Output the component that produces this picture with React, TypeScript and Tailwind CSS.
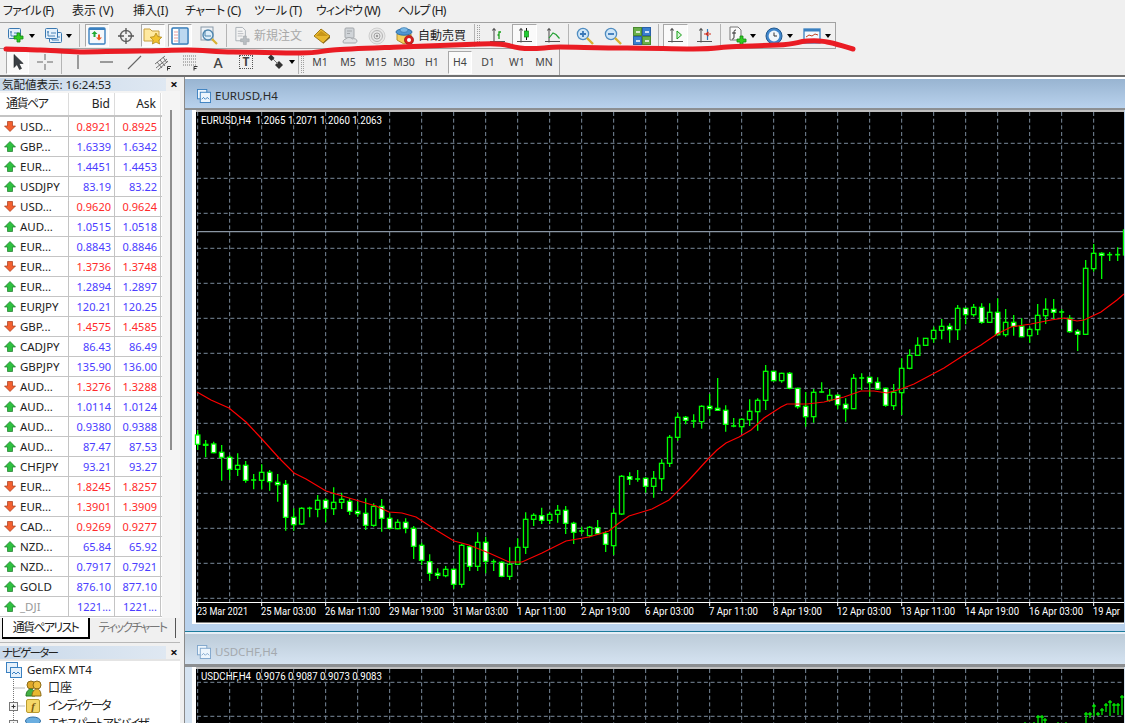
import type { ReactNode } from "react";

const FONT = "font-['Noto_Sans','Noto_Sans_CJK_JP',sans-serif] [font-feature-settings:'palt']";

// wick top, body top, body bottom, wick bottom, filled
type Candle = [number, number, number, number, number];

// read off the chart at 3x: first set y = 400 + v/3, second set y = 220 + v/3
const candlesA: Candle[] = [
  [90, 105, 133, 150, 1], [120, 133, 136, 172, 0], [125, 132, 158, 160, 1], [135, 157, 172, 242, 1],
  [165, 172, 208, 240, 1], [160, 196, 208, 228, 0], [183, 196, 241, 248, 1], [222, 240, 240, 268, 0],
  [193, 217, 241, 268, 0], [210, 217, 245, 272, 1], [222, 247, 254, 305, 1], [240, 253, 352, 392, 1],
  [325, 352, 374, 392, 1], [322, 325, 372, 375, 0], [320, 325, 325, 352, 0], [285, 301, 328, 352, 0],
  [295, 301, 325, 367, 1], [262, 307, 326, 345, 0], [278, 298, 307, 327, 0], [295, 304, 334, 345, 1],
  [305, 334, 341, 350, 1], [295, 340, 376, 390, 1], [310, 319, 376, 380, 0], [297, 319, 355, 395, 1],
  [340, 355, 385, 388, 1], [358, 367, 386, 388, 0], [355, 367, 385, 400, 1], [378, 385, 439, 477, 1],
  [428, 436, 481, 495, 1], [463, 485, 520, 543, 1], [505, 520, 526, 537, 1], [498, 508, 527, 532, 0],
  [505, 508, 553, 566, 1], [432, 436, 553, 563, 0], [436, 440, 499, 513, 1], [397, 427, 499, 513, 0],
  [410, 427, 484, 520, 1], [478, 485, 485, 513, 0], [484, 487, 529, 532, 1], [442, 493, 529, 540, 0],
  [415, 442, 493, 495, 0], [337, 358, 442, 462, 0], [340, 346, 358, 378, 0], [323, 347, 361, 372, 1],
  [335, 343, 361, 372, 0], [315, 331, 343, 368, 0], [318, 331, 370, 402, 1], [365, 370, 397, 432, 1],
  [380, 393, 393, 402, 0], [378, 382, 407, 412, 0], [360, 383, 401, 405, 1], [393, 401, 433, 456, 1],
  [325, 340, 437, 465, 0], [225, 229, 342, 345, 0], [217, 230, 238, 255, 1], [210, 237, 237, 245, 0],
  [232, 235, 259, 278, 1], [213, 235, 259, 293, 0], [178, 190, 236, 273, 0],
];

const candlesB: Candle[] = [
  [645, 652, 730, 741, 0], [578, 592, 652, 662, 0], [588, 592, 601, 613, 1], [583, 603, 603, 623, 0],
  [556, 559, 605, 626, 0], [522, 559, 566, 587, 1], [474, 565, 571, 572, 1], [556, 571, 613, 635, 1],
  [594, 618, 618, 622, 0], [595, 598, 620, 638, 0], [538, 574, 599, 618, 0], [535, 541, 575, 632, 0],
  [435, 454, 541, 570, 0], [452, 454, 482, 484, 1], [458, 460, 482, 488, 0], [456, 460, 505, 508, 1],
  [503, 505, 560, 566, 1], [516, 559, 590, 620, 1], [507, 517, 590, 608, 0], [487, 516, 516, 518, 0],
  [507, 526, 541, 545, 0], [522, 526, 554, 568, 1], [535, 553, 566, 605, 1], [462, 475, 566, 566, 0],
  [460, 474, 474, 510, 0], [470, 472, 488, 530, 1], [472, 487, 507, 510, 1], [503, 505, 556, 560, 1],
  [492, 517, 557, 570, 0], [415, 445, 518, 585, 0], [388, 406, 445, 448, 0], [352, 376, 406, 406, 0],
  [355, 355, 376, 378, 0], [320, 331, 356, 368, 0], [297, 319, 331, 358, 0], [310, 319, 329, 368, 1],
  [255, 265, 329, 360, 0], [265, 265, 284, 313, 1], [252, 262, 284, 290, 0], [250, 262, 307, 311, 1],
  [250, 277, 307, 308, 0], [235, 277, 344, 346, 1], [267, 307, 344, 350, 0], [285, 307, 319, 347, 1],
  [295, 319, 350, 352, 1], [320, 328, 347, 368, 0], [252, 286, 329, 345, 0], [235, 268, 287, 312, 0],
  [237, 268, 277, 298, 1], [268, 276, 276, 300, 0], [285, 295, 335, 338, 1], [328, 334, 343, 393, 1],
  [120, 145, 343, 343, 0], [72, 100, 146, 155, 0], [97, 100, 106, 177, 1], [96, 104, 104, 123, 0],
  [82, 104, 104, 123, 0], [25, 30, 105, 110, 0],
];

const ma: [number, number][] = [
  [198, 392], [205, 396], [212, 400], [230, 408], [247, 422], [262, 438], [280, 458], [295, 473], [307, 479],
  [327, 491], [350, 498], [377, 506], [390, 512], [403, 513], [417, 517], [437, 530], [455, 541], [470, 545],
  [490, 553], [510, 562], [523, 562], [543, 553], [567, 541], [590, 537], [610, 531], [620, 523], [630, 516],
  [653, 509], [670, 500], [690, 480], [710, 458], [718, 450], [727, 443], [740, 437], [752, 430], [765, 418],
  [782, 407], [788, 404], [808, 404], [825, 402], [845, 397], [862, 391], [875, 391], [888, 393], [902, 389],
  [915, 384], [945, 368], [962, 357], [982, 345], [998, 334], [1012, 327], [1032, 324], [1052, 320], [1065, 318],
  [1078, 321], [1085, 320], [1102, 312], [1118, 300], [1125, 294],
];

// label, drawn width
const labels: [string, number][] = [
  ["23 Mar 2021", 51], ["25 Mar 03:00", 55], ["26 Mar 11:00", 55], ["29 Mar 19:00", 55], ["31 Mar 03:00", 55],
  ["1 Apr 11:00", 49], ["2 Apr 19:00", 49], ["6 Apr 03:00", 49], ["7 Apr 11:00", 49], ["8 Apr 19:00", 49],
  ["12 Apr 03:00", 54], ["13 Apr 11:00", 54], ["14 Apr 19:00", 54], ["16 Apr 03:00", 54], ["19 Apr", 27],
];

const quotes: [string, string, string, number][] = [
  ["USD...", "0.8921", "0.8925", 0], ["GBP...", "1.6339", "1.6342", 1], ["EUR...", "1.4451", "1.4453", 1],
  ["USDJPY", "83.19", "83.22", 1], ["USD...", "0.9620", "0.9624", 0], ["AUD...", "1.0515", "1.0518", 1],
  ["EUR...", "0.8843", "0.8846", 1], ["EUR...", "1.3736", "1.3748", 0], ["EUR...", "1.2894", "1.2897", 1],
  ["EURJPY", "120.21", "120.25", 1], ["GBP...", "1.4575", "1.4585", 0], ["CADJPY", "86.43", "86.49", 1],
  ["GBPJPY", "135.90", "136.00", 1], ["AUD...", "1.3276", "1.3288", 0], ["AUD...", "1.0114", "1.0124", 1],
  ["AUD...", "0.9380", "0.9388", 1], ["AUD...", "87.47", "87.53", 1], ["CHFJPY", "93.21", "93.27", 1],
  ["EUR...", "1.8245", "1.8257", 0], ["EUR...", "1.3901", "1.3909", 0], ["CAD...", "0.9269", "0.9277", 0],
  ["NZD...", "65.84", "65.92", 1], ["NZD...", "0.7917", "0.7921", 1], ["GOLD", "876.10", "877.10", 1],
  ["_DJI", "1221...", "1221...", 1],
];

function CandleMark({ x, c, y0 }: { x: number; c: Candle; y0: number }) {
  const [wt, bt, bb, wb, filled] = c;
  const y = (v: number) => y0 + v / 3;
  if (bt === bb) {
    return (
      <g stroke="#00ff00" strokeWidth="1.3">
        <line x1={x} x2={x} y1={y(wt)} y2={y(wb)} />
        <line x1={x - 2.5} x2={x + 2.5} y1={y(bt)} y2={y(bt)} strokeWidth="1.6" />
      </g>
    );
  }
  return (
    <g stroke="#00ff00" strokeWidth="1.3">
      <line x1={x} x2={x} y1={y(wt)} y2={y(wb)} />
      <rect x={x - 2.2} width="4.4" y={y(bt)} height={y(bb) - y(bt)} fill={filled ? "#ffffff" : "#000000"} />
    </g>
  );
}

function Grid({ top, bottom, rows }: { top: number; bottom: number; rows: number[] }) {
  const cols = Array.from({ length: 29 }, (_, i) => 198.67 + 32 * i);
  return (
    <g stroke="#7a8a9c" strokeWidth="1" strokeDasharray="4 2.67">
      {cols.map((x) => (
        <line key={x} x1={x} x2={x} y1={top} y2={bottom} />
      ))}
      {rows.map((y) => (
        <line key={y} x1="198" x2="1125" y1={y} y2={y} />
      ))}
    </g>
  );
}

function MainChart() {
  const rows = Array.from({ length: 14 }, (_, i) => 143.3 + 35 * i);
  return (
    <svg className="block shrink-0" width="932" height="514" viewBox="193 110 932 514">
      <rect x="193" y="110" width="932" height="514" fill="#000" />
      <rect x="193" y="110" width="4" height="514" fill="#fff" />
      <line x1="193" x2="1125" y1="111" y2="111" stroke="#fff" strokeWidth="1.4" />
      <Grid top={112} bottom={602} rows={rows} />
      <line x1="198" x2="1125" y1="231.7" y2="231.7" stroke="#8a96a4" strokeWidth="1.2" />
      <line x1="197" x2="1125" y1="602.500" y2="602.500" stroke="#fff" />
      {labels.map(([l, len], i) => (
        <g key={l}>
          <line x1={198.67 + 64 * i} x2={198.67 + 64 * i} y1="602" y2="606" stroke="#fff" />
          <text
            x={198 + 64 * i}
            y="615"
            fill="#fff"
            fontSize="11"
            fontFamily="Roboto, sans-serif"
            textLength={len}
            lengthAdjust="spacingAndGlyphs"
          >
            {l}
          </text>
        </g>
      ))}
      {candlesA.map((c, i) => (
        <CandleMark key={i} x={198.67 + 8 * i} c={c} y0={400} />
      ))}
      {candlesB.map((c, i) => (
        <CandleMark key={i} x={670.67 + 8 * i} c={c} y0={220} />
      ))}
      <polyline points={ma.map((p) => p.join(",")).join(" ")} fill="none" stroke="#ff0000" strokeWidth="1.2" />
      <text
        x="202"
        y="124"
        fill="#fff"
        fontSize="10.5"
        fontFamily="Roboto, sans-serif"
        xmlSpace="preserve"
        textLength="181"
        lengthAdjust="spacingAndGlyphs"
      >
        EURUSD,H4  1.2065 1.2071 1.2060 1.2063
      </text>
      <line x1="193" x2="1125" y1="623.300" y2="623.300" stroke="#fff" strokeWidth="1.4" />
    </svg>
  );
}

function SecondChart() {
  const bars: [number, number, number][] = [
    [1026, 722, 723], [1035, 722, 723], [1039, 715, 723], [1043, 715, 723], [1046, 718, 723], [1059, 722, 723],
    [1067, 722, 723], [1087, 712, 723], [1091, 712, 718], [1095, 704, 716], [1099, 712, 716], [1103, 708, 715],
    [1107, 703, 712], [1111, 700, 716], [1115, 703, 713], [1119, 703, 715], [1123, 695, 715],
  ];
  return (
    <svg className="block shrink-0" width="932" height="56" viewBox="193 667 932 56">
      <rect x="193" y="667" width="932" height="56" fill="#000" />
      <rect x="193" y="667" width="4" height="56" fill="#fff" />
      <line x1="193" x2="1125" y1="668" y2="668" stroke="#fff" strokeWidth="1.4" />
      <Grid top={669} bottom={723} rows={[682.3, 716.3]} />
      {bars.map(([x, t, b]) => (
        <g key={x} stroke="#00ff00" strokeWidth="1.2">
          <line x1={x} x2={x} y1={t} y2={b} />
          <line x1={x - 2} x2={x + 2} y1={t + 2} y2={t + 2} />
        </g>
      ))}
      <text
        x="202"
        y="680"
        fill="#fff"
        fontSize="10.5"
        fontFamily="Roboto, sans-serif"
        xmlSpace="preserve"
        textLength="181"
        lengthAdjust="spacingAndGlyphs"
      >
        USDCHF,H4  0.9076 0.9087 0.9073 0.9083
      </text>
    </svg>
  );
}

function Icon({ children, w = 18, h = 18 }: { children: ReactNode; w?: number; h?: number }) {
  return (
    <svg width={w} height={h} viewBox={`0 0 ${w} ${h}`} className="block">
      {children}
    </svg>
  );
}

function Plus({ x, y }: { x: number; y: number }) {
  return (
    <path
      d={`M${x + 3} ${y}h3v3h3v3h-3v3h-3v-3h-3v-3h3z`}
      fill="#33cc22"
      stroke="#118811"
      strokeWidth=".8"
    />
  );
}

function ChartWin({ x, y, fill = "#e4f0fb" }: { x: number; y: number; fill?: string }) {
  return (
    <g>
      <rect x={x + 0.5} y={y + 0.5} width="12" height="10" rx="1" fill={fill} stroke="#3a78b0" />
      <path d={`M${x + 3} ${y + 3}v5h7M${x + 2} ${y + 4}h2M${x + 6} ${y + 5}h5`} stroke="#3a78b0" strokeWidth=".9" fill="none" />
    </g>
  );
}

const NewChartIcon = () => (
  <Icon>
    <ChartWin x={1} y={1} />
    <Plus x={7} y={6} />
  </Icon>
);
const ProfileIcon = () => (
  <Icon>
    <ChartWin x={5} y={5} />
    <ChartWin x={1} y={1} />
  </Icon>
);
const WatchIcon = () => (
  <Icon>
    <rect x="1" y="1" width="16" height="16" rx="1" fill="#f4f8fc" stroke="#3a80c0" strokeWidth="1.4" />
    <rect x="1" y="1" width="16" height="2" fill="#3a80c0" />
    <path d="M6.5 4l3 3h-2v3h-2v-3h-2z" fill="#22aa33" />
    <path d="M11 13.5l-3-3h2v-3h2v3h2z" fill="#ee5522" />
  </Icon>
);
const CrossCircleIcon = () => (
  <Icon>
    <circle cx="9" cy="9" r="5.5" fill="none" stroke="#666" strokeWidth="1.4" />
    <path d="M9 1v6M9 11v6M1 9h6M11 9h6" stroke="#555" strokeWidth="1.3" />
  </Icon>
);
const FolderStarIcon = () => (
  <Icon w={20} h={20}>
    <path d="M1 3h6l2 2h7v10H1z" fill="#ffe9a0" stroke="#c8a040" />
    <path d="M13 7l1.800 3.600 4 .6-2.900 2.800.7 4-3.600-1.900-3.600 1.900.7-4-2.900-2.800 4-.6z" fill="#f2c230" stroke="#a88010" strokeWidth=".7" />
  </Icon>
);
const NavIcon = () => (
  <Icon>
    <rect x="1" y="1" width="16" height="16" rx="1" fill="#fff" stroke="#2f78b8" strokeWidth="1.5" />
    <rect x="8" y="2" width="8" height="14" fill="#bcd8f0" />
    <path d="M8 2v14" stroke="#2f78b8" />
    <path d="M3.5 5h3M3.5 8h3M3.5 11h3M3.5 14h3" stroke="#d04040" strokeWidth="1.2" strokeDasharray="1 1" />
  </Icon>
);
const TesterIcon = () => (
  <Icon w={20} h={20}>
    <rect x="2" y="1" width="12" height="13" fill="#eef2f6" stroke="#8a9aa8" />
    <circle cx="9" cy="9" r="5" fill="#d8ecfa" fillOpacity=".8" stroke="#4f86ad" strokeWidth="1.4" />
    <path d="M6 4v6h6" stroke="#4f86ad" fill="none" />
    <path d="M13 13l5 5" stroke="#d8b030" strokeWidth="2.2" />
  </Icon>
);
const NewOrderIcon = () => (
  <Icon w={20} h={20}>
    <path d="M3 1h7l3 3v11H3z" fill="#f4f4f4" stroke="#aab0b6" />
    <path d="M5 5h5M5 7.500h6M5 10h5" stroke="#b8bcc0" />
    <path d="M11 10h3v3h3v3h-3v3h-3v-3H8v-3h3z" fill="#b9bec2" stroke="#a0a4a8" strokeWidth=".6" />
  </Icon>
);
const RibbonIcon = () => (
  <Icon>
    <path d="M1 9l7-7 9 7-7 7z" fill="#e8b830" stroke="#a07a18" />
    <path d="M3 9l5-5 7 5" fill="#c89618" />
    <path d="M10 16l7-7v2l-7 6z" fill="#8a6a18" />
  </Icon>
);
const PersonIcon = () => (
  <Icon>
    <rect x="4" y="1" width="9" height="10" rx="1" fill="#d0d4d8" stroke="#a4a8ac" />
    <path d="M6 4h5M6 6.500h3" stroke="#a4a8ac" />
    <path d="M2 15c0-2 2-3 3-3 1-2 5-2 6 0 2-1 5 0 5 2 0 1-1 2-2 2H4c-1 0-2 0-2-1z" fill="#e0e2e4" stroke="#a4a8ac" />
  </Icon>
);
const SignalIcon = () => (
  <Icon>
    <circle cx="9" cy="9" r="8" fill="#e8e8e8" stroke="#cfcfcf" />
    <circle cx="9" cy="9" r="5.500" fill="none" stroke="#b4b4b4" />
    <circle cx="9" cy="9" r="3" fill="none" stroke="#a4a4a4" />
    <circle cx="9" cy="9" r="1.200" fill="#999" />
  </Icon>
);
const AutoIcon = () => (
  <Icon w={20} h={20}>
    <path d="M2 8l7-3 7 3v6l-7 4-7-4z" fill="#f3cf5c" stroke="#b09030" />
    <ellipse cx="9" cy="6" rx="8" ry="3.200" fill="#4f96d2" stroke="#2f6ea4" />
    <ellipse cx="9" cy="4" rx="4" ry="2.400" fill="#7ab8e6" stroke="#2f6ea4" strokeWidth=".6" />
    <circle cx="14" cy="14" r="4.600" fill="#d42020" stroke="#8a1010" strokeWidth=".6" />
    <circle cx="14" cy="14" r="2" fill="#fff" />
  </Icon>
);
const Axes = () => <path d="M5 1.500v14M1 14.500h15M3.300 3.500L5 1.500l1.700 2" stroke="#555" strokeWidth="1.1" fill="none" />;
const BarsIcon = () => (
  <Icon>
    <Axes />
    <path d="M10 12V5h2M8.500 8H10" stroke="#17a017" strokeWidth="1.3" fill="none" />
  </Icon>
);
const CandleIcon = () => (
  <Icon>
    <Axes />
    <path d="M10.500 1v12" stroke="#111" />
    <rect x="8.500" y="4" width="4" height="6" fill="#22cc33" stroke="#118811" strokeWidth=".7" />
  </Icon>
);
const LineIcon = () => (
  <Icon>
    <Axes />
    <path d="M5 11l4-5 3 1.500 3.500 4" stroke="#22a033" strokeWidth="1.2" fill="none" />
  </Icon>
);
const ZoomIcon = ({ plus }: { plus?: boolean }) => (
  <Icon>
    <circle cx="7" cy="7" r="5.600" fill="#cfe6f8" stroke="#4f8cc0" strokeWidth="1.3" />
    <path d={plus ? "M4 7h6M7 4v6" : "M4 7h6"} stroke="#3a78b8" strokeWidth="1.8" />
    <path d="M11 11l6 6" stroke="#d8b030" strokeWidth="2.4" />
  </Icon>
);
const TileIcon = () => (
  <Icon>
    <rect x="0.5" y="0.5" width="8" height="8" fill="#6ab04a" stroke="#4a8a30" />
    <rect x="9.5" y="0.5" width="8" height="8" fill="#3a80d0" stroke="#2a60a8" />
    <rect x="0.5" y="9.5" width="8" height="8" fill="#3a80d0" stroke="#2a60a8" />
    <rect x="9.5" y="9.5" width="8" height="8" fill="#6ab04a" stroke="#4a8a30" />
    <path d="M3 5h4M12 5h4M3 14h4M12 14h4" stroke="#fff" strokeWidth="1.4" />
  </Icon>
);
const ScrollIcon = () => (
  <Icon>
    <Axes />
    <path d="M10 4l4.500 4-4.500 4z" fill="#d8f5d8" stroke="#18a018" />
  </Icon>
);
const ShiftIcon = () => (
  <Icon>
    <Axes />
    <path d="M11.500 2v11" stroke="#2f78b8" strokeWidth="1.2" />
    <path d="M8 7h7M12.500 5l-2.500 2 2.500 2" stroke="#d03020" strokeWidth="1.1" fill="none" />
  </Icon>
);
const IndicatorIcon = () => (
  <Icon w={20} h={20}>
    <path d="M2 1h8l3 3v10H2z" fill="#fafafa" stroke="#777" />
    <path d="M8 4c-2 0-2 1-2 3v4c0 2-1 2-2 2M4 7h4" stroke="#333" fill="none" />
    <Plus x={9} y={10} />
  </Icon>
);
const ClockIcon = () => (
  <Icon>
    <circle cx="9" cy="9" r="8" fill="#3f86cc" stroke="#22598f" />
    <circle cx="9" cy="9" r="5.400" fill="#f0f6fb" />
    <path d="M9 5.500V9h3" stroke="#333" fill="none" />
  </Icon>
);
const TemplateIcon = () => (
  <Icon>
    <rect x="1" y="2" width="16" height="14" fill="#f4f8fc" stroke="#3a80c0" strokeWidth="1.3" />
    <rect x="1" y="2" width="16" height="2.500" fill="#3a80c0" />
    <path d="M3 10l3-2 3 1 3-2 3 1" stroke="#c04020" fill="none" />
    <path d="M3 14h12" stroke="#70a050" />
  </Icon>
);
const ArrowIcon = () => (
  <Icon>
    <path d="M5 1.500v13l3-3 2.500 5 2-1-2.500-5h4.200z" fill="#3a3f44" stroke="#1e2124" strokeWidth=".6" />
  </Icon>
);
const ThinCrossIcon = () => (
  <Icon>
    <path d="M9 1v6M9 11v6M1 9h6M11 9h6" stroke="#666" />
  </Icon>
);
const VLineIcon = () => (
  <Icon>
    <path d="M9 2v14" stroke="#555" strokeWidth="1.1" />
  </Icon>
);
const HLineIcon = () => (
  <Icon>
    <path d="M2 9h13" stroke="#555" strokeWidth="1.1" />
  </Icon>
);
const TrendIcon = () => (
  <Icon>
    <path d="M2 16L15 3" stroke="#666" strokeWidth="1.1" />
  </Icon>
);
const ChannelIcon = () => (
  <Icon>
    <path d="M1 11l10-8M2 15l11-9M4 17l10-9M3 9l5 6M6 7l5 6M9 4l4 6" stroke="#666" strokeWidth=".9" />
    <path d="M13.500 17.500v-4h3.500M13.500 15.500h2.500" stroke="#333" fill="none" />
  </Icon>
);
const FiboIcon = () => (
  <Icon>
    <path d="M1 3h13M1 6h13M1 9h13M1 12h13" stroke="#777" strokeDasharray="1 1" />
    <path d="M12 17.500v-4h3.500M12 15.500h2.500" stroke="#333" fill="none" />
  </Icon>
);
const ShapesIcon = () => (
  <Icon>
    <path d="M4 1.500l3.500 3.500-3 3-3.500-3.500z" fill="#333" />
    <path d="M12 8l4 4-4 4-4-4z" fill="#333" />
    <path d="M6 6l5 5" stroke="#777" />
  </Icon>
);

function Caret({ className }: { className: string }) {
  return (
    <div className={`flex w-[7px] shrink-0 items-center justify-center ${className}`}>
      <div className="h-0 w-0 border-x-[3.5px] border-t-[4px] border-x-transparent border-t-black" />
    </div>
  );
}

function Btn({ className, pressed, children }: { className: string; pressed?: boolean; children?: ReactNode }) {
  const look = pressed
    ? "border border-t-[#a8a8a8] border-l-[#a8a8a8] border-r-white border-b-white bg-[#fafafa]"
    : "";
  return (
    <div className={`flex h-[23px] shrink-0 items-center justify-center ${look} ${className}`}>{children}</div>
  );
}

function Sep({ className }: { className: string }) {
  return <div className={`h-[23px] w-px shrink-0 bg-[#b4b4b4] ${className}`} />;
}

function Grip({ className }: { className: string }) {
  return (
    <div className={`h-[21px] w-[3px] shrink-0 border-x border-dotted border-x-[#a0a0a0] ${className}`} />
  );
}

function TopToolbar() {
  return (
    <div className="flex h-[27px] w-[836px] shrink-0 items-center border-y border-r border-[#a2a2a2]">
      <Btn className="ml-[5px] w-[22px]"><NewChartIcon /></Btn>
      <Caret className="ml-[1px]" />
      <Btn className="ml-[7px] w-[22px]"><ProfileIcon /></Btn>
      <Caret className="ml-[1px]" />
      <Sep className="ml-[7px]" />
      <Btn pressed className="ml-[5px] w-[24px]"><WatchIcon /></Btn>
      <Btn className="ml-[5px] w-[24px]"><CrossCircleIcon /></Btn>
      <Btn pressed className="ml-[3px] w-[24px]"><FolderStarIcon /></Btn>
      <Btn pressed className="ml-[3px] w-[24px]"><NavIcon /></Btn>
      <Btn className="ml-[5px] w-[24px]"><TesterIcon /></Btn>
      <Sep className="ml-[5px]" />
      <Btn className="ml-[6px] w-[19px]"><NewOrderIcon /></Btn>
      <div className="ml-[2px] w-[48px] shrink-0 whitespace-nowrap text-[12px] text-[#a9a9a9] [font-feature-settings:normal]">新規注文</div>
      <Btn className="ml-[8px] w-[23px]"><RibbonIcon /></Btn>
      <Btn className="ml-[6px] w-[22px]"><PersonIcon /></Btn>
      <Btn className="ml-[5px] w-[22px]"><SignalIcon /></Btn>
      <Btn className="ml-[6px] w-[22px]"><AutoIcon /></Btn>
      <div className="ml-[2px] w-[48px] shrink-0 whitespace-nowrap text-[12px] text-[#222] [font-feature-settings:normal]">自動売買</div>
      <Sep className="ml-[8px]" />
      <Grip className="ml-[2px]" />
      <Btn className="ml-[6px] w-[24px]"><BarsIcon /></Btn>
      <Btn pressed className="ml-[2px] w-[25px]"><CandleIcon /></Btn>
      <Btn className="ml-[4px] w-[24px]"><LineIcon /></Btn>
      <Sep className="ml-[3px]" />
      <Btn className="ml-[4px] w-[24px]"><ZoomIcon plus /></Btn>
      <Btn className="ml-[4px] w-[24px]"><ZoomIcon /></Btn>
      <Btn className="ml-[5px] w-[24px]"><TileIcon /></Btn>
      <Sep className="ml-[4px]" />
      <Btn pressed className="ml-[4px] w-[25px]"><ScrollIcon /></Btn>
      <Btn className="ml-[4px] w-[25px]"><ShiftIcon /></Btn>
      <Sep className="ml-[3px]" />
      <Btn className="ml-[7px] w-[20px]"><IndicatorIcon /></Btn>
      <Caret className="ml-[1px]" />
      <Btn className="ml-[8px] w-[20px]"><ClockIcon /></Btn>
      <Caret className="ml-[2px]" />
      <Btn className="ml-[9px] w-[20px]"><TemplateIcon /></Btn>
      <Caret className="ml-[2px]" />
    </div>
  );
}

function TfBtn({ label, className, pressed }: { label: string; className: string; pressed?: boolean }) {
  return (
    <Btn pressed={pressed} className={`w-[24px] pt-[2px] text-[10.5px] text-[#444] ${className}`}>
      {label}
    </Btn>
  );
}

function SecondToolbar() {
  return (
    <div className="flex h-[26px] w-[560px] shrink-0 items-center border-r border-[#a2a2a2]">
      <Btn pressed className="ml-[6px] w-[23px]"><ArrowIcon /></Btn>
      <Btn className="ml-[4px] w-[24px]"><ThinCrossIcon /></Btn>
      <Sep className="ml-[4px]" />
      <Btn className="ml-[4px] w-[24px]"><VLineIcon /></Btn>
      <Btn className="ml-[5px] w-[24px]"><HLineIcon /></Btn>
      <Btn className="ml-[4px] w-[24px]"><TrendIcon /></Btn>
      <Btn className="ml-[4px] w-[24px]"><ChannelIcon /></Btn>
      <Btn className="ml-[4px] w-[24px]"><FiboIcon /></Btn>
      <Btn className="ml-[3px] w-[24px] text-[14px] font-medium text-[#444]">A</Btn>
      <Btn className="ml-[4px] w-[24px]">
        <div className="flex h-[14px] w-[14px] items-center justify-center border border-dotted border-[#555] text-[12px] font-bold leading-none text-[#444]">T</div>
      </Btn>
      <Btn className="ml-[7px] w-[22px]"><ShapesIcon /></Btn>
      <Caret className="ml-[1px]" />
      <Sep className="ml-[3px]" />
      <Grip className="ml-[2px]" />
      <TfBtn label="M1" className="ml-[4px]" />
      <TfBtn label="M5" className="ml-[4px]" />
      <TfBtn label="M15" className="ml-[4px]" />
      <TfBtn label="M30" className="ml-[4px]" />
      <TfBtn label="H1" className="ml-[4px]" />
      <TfBtn label="H4" className="ml-[4px]" pressed />
      <TfBtn label="D1" className="ml-[4px]" />
      <TfBtn label="W1" className="ml-[5px]" />
      <TfBtn label="MN" className="ml-[3px]" />
    </div>
  );
}

function PanelHeader({ title, className = "" }: { title: string; className?: string }) {
  return (
    <div className="flex h-[13px] shrink-0 items-center">
      <div className={`flex h-full w-[166px] items-center whitespace-nowrap bg-gradient-to-r from-[#c9d9ea] to-[#dfe8f2] pl-[2px] text-[11.5px] text-[#222] ${className}`}>
        {title}
      </div>
      <div className="ml-[3px] w-[10px] text-center text-[13px] font-bold leading-none text-[#111]">×</div>
    </div>
  );
}

function QuoteArrow({ up }: { up: boolean }) {
  return (
    <svg width="12" height="11" viewBox="0 0 12 11" className="block shrink-0">
      {up ? (
        <path d="M6 .5l5.500 5.500H8.500v4.500h-5V6H.5z" fill="#2fc040" stroke="#1a7a28" strokeWidth=".7" />
      ) : (
        <path d="M6 10.500L.5 5h3V.5h5V5h3z" fill="#f26030" stroke="#a83a18" strokeWidth=".7" />
      )}
    </svg>
  );
}

function MarketWatch() {
  return (
    <div className="flex h-[527px] shrink-0 bg-[#f4f4f4] pt-[2px]">
      <div className="w-[162px] shrink-0 bg-white">
        <div className="grid h-[24px] grid-cols-[69px_46px_46px] border-b-2 border-[#c4c4c4] text-[12px] text-[#222]">
          <div className="flex items-center border-r border-[#dcdcdc] pl-[6px] tracking-[-1.5px]">通貨ペア</div>
          <div className="flex items-center justify-end border-r border-[#dcdcdc] pr-[4px]">Bid</div>
          <div className="flex items-center justify-end border-r border-[#dcdcdc] pr-[4px]">Ask</div>
        </div>
        {quotes.map(([name, bid, ask, up], i) => (
          <div key={i} className="grid h-[20px] grid-cols-[69px_46px_46px] border-b border-[#c4c4c4] text-[11px] leading-none">
            <div className="flex items-center overflow-hidden border-r border-[#c4c4c4] pl-[4px]">
              <QuoteArrow up={!!up} />
              <span className={`ml-[4px] whitespace-nowrap text-[11.5px] ${name === "_DJI" ? "text-[#999]" : "text-[#222]"}`}>{name}</span>
            </div>
            <div className={`flex items-center justify-end border-r border-[#c4c4c4] pr-[3px] ${up ? "text-[#4a3cff]" : "text-[#ff2a2a]"}`}>{bid}</div>
            <div className={`flex items-center justify-end border-r border-[#c4c4c4] pr-[3px] ${up ? "text-[#4a3cff]" : "text-[#ff2a2a]"}`}>{ask}</div>
          </div>
        ))}
      </div>
      <div className="flex w-[18px] shrink-0 justify-center pt-[17px]">
        <div className="h-[340px] w-[2px] bg-[#8f8f8f]" />
      </div>
    </div>
  );
}

function Tabs() {
  return (
    <div className="flex h-[25px] shrink-0 items-start border-b border-[#b8b8b8] pl-[2px]">
      <div className="flex h-[21px] w-[88px] items-center justify-center whitespace-nowrap border-b-2 border-l border-r-2 border-black bg-white text-[12px] tracking-[-1.7px] text-[#222]">
        通貨ペアリスト
      </div>
      <div className="flex h-[20px] w-[86px] items-center justify-center whitespace-nowrap border-r border-[#555] text-[12px] tracking-[-1.7px] text-[#777]">
        ティックチャート
      </div>
    </div>
  );
}

function TreeGlyph({ plus, end }: { plus?: boolean; end?: boolean }) {
  return (
    <svg width="25" height="18" viewBox="0 0 25 18" className="block shrink-0">
      <path d={end ? "M13.500 0v9M13.500 9H25" : "M13.500 0v18M13.500 9H25"} stroke="#777" strokeDasharray="1 1" fill="none" />
      {plus && (
        <g>
          <rect x="9.500" y="5.500" width="8" height="8" fill="#f4f4f4" stroke="#777" />
          <path d="M11.500 9.500h4M13.500 7.500v4" stroke="#333" />
        </g>
      )}
    </svg>
  );
}

function Navigator() {
  return (
    <div className="flex-1 overflow-hidden border-t-2 border-[#e4e4e4] bg-white text-[12px] text-[#222]">
      <div className="flex h-[18px] items-center pl-[6px]">
        <svg width="16" height="16" viewBox="0 0 16 16" className="block">
          <rect x=".5" y=".5" width="11" height="10" fill="#e4f0fb" stroke="#3a80c0" />
          <rect x="4.500" y="5.500" width="11" height="10" fill="#e4f0fb" stroke="#3a80c0" />
          <path d="M6 12l2-2 2 2 2-2 2 2" stroke="#3a80c0" fill="none" />
        </svg>
        <span className="ml-[5px] text-[11.5px]">GemFX MT4</span>
      </div>
      <div className="flex h-[18px] items-center">
        <TreeGlyph />
        <svg width="17" height="17" viewBox="0 0 17 17" className="block shrink-0">
          <circle cx="6" cy="5" r="4" fill="#e0a828" stroke="#8a6a18" />
          <circle cx="12" cy="5" r="4" fill="#f0c040" stroke="#8a6a18" />
          <path d="M1 16c0-5 3-7 5-7s4 2 4 7z" fill="#44b044" stroke="#227722" />
          <path d="M7 16c0-5 3-7 5-7s4 2 4 7z" fill="#e8b830" stroke="#8a6a18" />
        </svg>
        <span className="ml-[6px]">口座</span>
      </div>
      <div className="flex h-[18px] items-center">
        <TreeGlyph plus />
        <div className="ml-[1px] flex h-[14px] w-[14px] shrink-0 items-center justify-center rounded-[2px] border border-[#b89a30] bg-[#f5d769] font-['Liberation_Serif',serif] text-[11px] font-bold italic leading-none text-[#7a5a10]">f</div>
        <span className="ml-[8px] whitespace-nowrap tracking-[-1.8px]">インディケータ</span>
      </div>
      <div className="flex h-[18px] items-center">
        <TreeGlyph plus />
        <svg width="16" height="16" viewBox="0 0 16 16" className="block shrink-0">
          <ellipse cx="8" cy="5" rx="7.500" ry="4" fill="#6aaee0" stroke="#2f6ea4" />
        </svg>
        <span className="ml-[7px] whitespace-nowrap tracking-[-1.8px]">エキスパートアドバイザ</span>
      </div>
    </div>
  );
}

function WindowIcon({ muted }: { muted?: boolean }) {
  const c = muted ? "#7fa6cc" : "#3a80c0";
  return (
    <svg width="14" height="14" viewBox="0 0 15 15" className="block shrink-0">
      <rect x=".5" y=".5" width="10" height="10" fill="#eef6fd" stroke={c} />
      <rect x="3.500" y="3.500" width="11" height="11" fill="#eef6fd" stroke={c} />
      <path d="M5 11l2-2 2 2 2-2 2 2" stroke={c} fill="none" />
    </svg>
  );
}

function App() {
  return (
    <div className={`relative flex h-[723px] w-[1125px] flex-col overflow-hidden bg-[#f0f0f0] ${FONT}`}>
      <div className="flex h-[22px] shrink-0 items-center pl-[3px] text-[12px] text-[#222]">
        <span className="w-[69px] shrink-0 whitespace-nowrap tracking-[-1px]">ファイル (F)</span>
        <span className="w-[61px] shrink-0 whitespace-nowrap">表示 (V)</span>
        <span className="w-[52px] shrink-0 whitespace-nowrap">挿入(I)</span>
        <span className="w-[69px] shrink-0 whitespace-nowrap tracking-[-0.5px]">チャート (C)</span>
        <span className="w-[62px] shrink-0 whitespace-nowrap tracking-[-0.5px]">ツール (T)</span>
        <span className="w-[82px] shrink-0 whitespace-nowrap tracking-[-1px]">ウィンドウ (W)</span>
        <span className="shrink-0 whitespace-nowrap tracking-[-0.9px]">ヘルプ (H)</span>
      </div>
      <TopToolbar />
      <SecondToolbar />
      <div className="h-[2px] shrink-0 bg-[#707070]" />

      <div className="flex min-h-0 flex-1">
        <div className="flex w-[180px] shrink-0 flex-col">
          <div className="h-[1px] shrink-0" />
          <PanelHeader title="気配値表示: 16:24:53" />
          <MarketWatch />
          <Tabs />
          <div className="h-[3px] shrink-0" />
          <PanelHeader title="ナビゲーター" className="tracking-[-1.7px]" />
          <Navigator />
        </div>
        <div className="w-[5px] shrink-0 border-r border-[#8a8a8a]" />
        <div className="flex min-w-0 flex-1 flex-col">
          <div className="h-[2px] shrink-0 bg-white" />
          <div className="flex h-[29px] shrink-0 items-center bg-gradient-to-b from-[#98b4d1] to-[#b9d2ed] pl-[12px] pt-[5px] text-[11.5px] text-[#2a2a2a]">
            <WindowIcon />
            <span className="ml-[4px]">EURUSD,H4</span>
          </div>
          <div className="h-[2px] shrink-0 bg-[#8c8f92]" />
          <div className="flex shrink-0 bg-[#b9d2ed] pl-[7px]">
            <MainChart />
          </div>
          <div className="h-[7px] shrink-0 bg-[#b9d2ed]" />
          <div className="h-[1px] shrink-0 bg-[#1c7c9c]" />
          <div className="h-[2px] shrink-0 bg-[#e6eef6]" />
          <div className="flex h-[30px] shrink-0 items-center bg-gradient-to-b from-[#bccbd8] to-[#d5e3f1] pl-[12px] pt-[5px] text-[11.5px] text-[#a4a9ae]">
            <WindowIcon muted />
            <span className="ml-[4px]">USDCHF,H4</span>
          </div>
          <div className="h-[3px] shrink-0 bg-[#8c8f92]" />
          <div className="flex flex-1 bg-[#d5e3f1] pl-[7px]">
            <SecondChart />
          </div>
        </div>
      </div>

      {/* hand-drawn annotation over the toolbar */}
      <svg className="pointer-events-none absolute left-0 top-0" width="1125" height="80" viewBox="0 0 1125 80">
        <path
          d="M6 49C20 49 30 50 40 50S65 52 80 52 120 51 140 51 170 50 187 50 215 52 233 52 280 53 300 53 320 51 333 50 375 48 400 47 450 45 480 44 505 46 520 48 545 47 560 47 600 48 627 48 670 49 693 49 715 48 727 47 755 46 777 45 795 42 807 41 820 41 827 42 842 46 853 49"
          fill="none"
          stroke="#ea1c24"
          strokeWidth="5"
          strokeLinecap="round"
          strokeLinejoin="round"
        />
      </svg>
    </div>
  );
}

export default App;
